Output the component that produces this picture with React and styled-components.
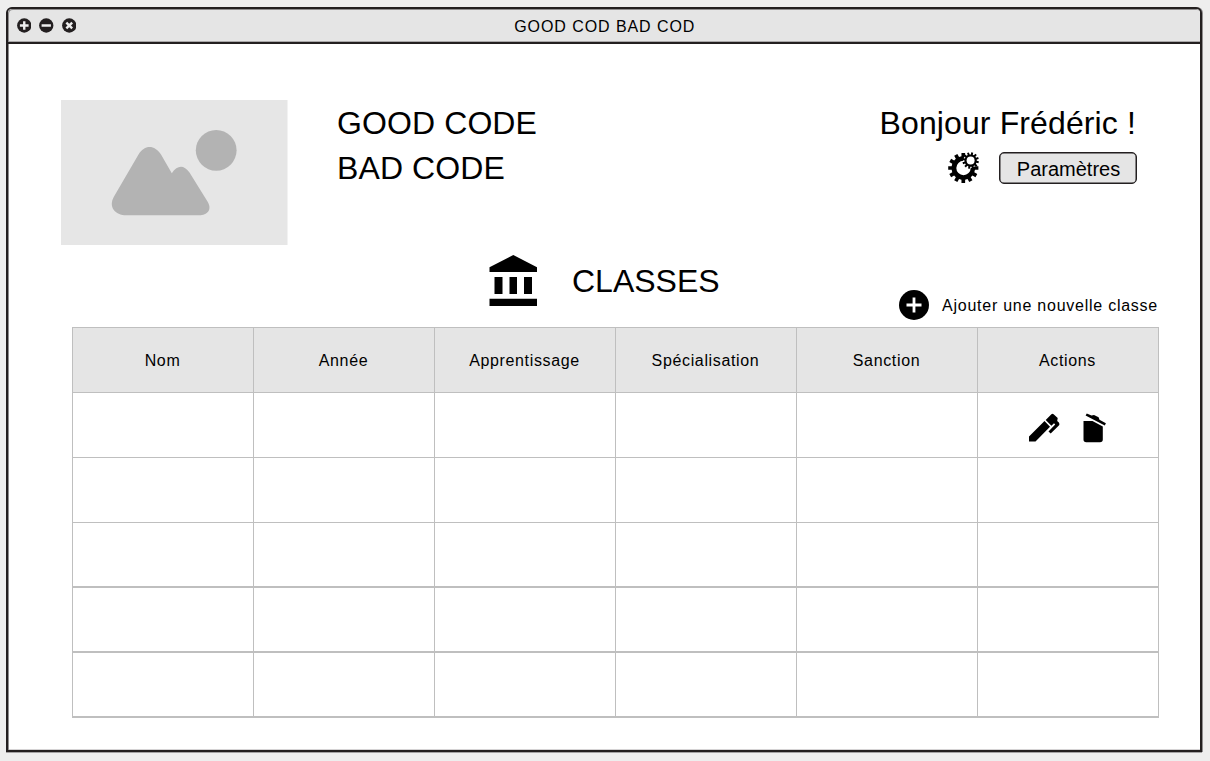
import React from "react";
import styled, { createGlobalStyle } from "styled-components";

const GlobalStyle = createGlobalStyle`
  * { box-sizing: border-box; }
  body {
    margin: 0;
    background: #eeeeee;
    color: #000;
    font-family: "Liberation Sans", Arial, sans-serif;
  }
  svg { display: block; flex: none; }
`;

const Page = styled.div`
  width: 1210px;
  height: 761px;
  padding: 7px 8px 9px 6px;
`;

const Window = styled.main`
  width: 1196px;
  height: 745px;
  border: 2px solid #231f20;
  border-radius: 6px 6px 0 0;
  background: #fff;
  box-shadow: 1px 0 0 #8f8d8e, 0 1px 0 #a5a3a4;
  overflow: hidden;
`;

const TitleBar = styled.header`
  display: grid;
  grid-template-columns: 1fr auto 1fr;
  align-items: center;
  height: 35px;
  padding: 0 7px 0 8.5px;
  background: #e5e5e5;
  border-bottom: 2px solid #231f20;
  border-radius: 4px 4px 0 0;
  box-shadow: inset 1px 1px 0 #8f8d8e, inset 0 -1px 0 #aaa8a9;
`;

const WindowTitle = styled.h1`
  margin: 2px 0 0;
  font-size: 16px;
  font-weight: 400;
  line-height: 20px;
  letter-spacing: 0.93px;
  white-space: nowrap;
`;

const WindowControls = styled.div`
  display: flex;
  gap: 8px;
  margin-top: -1px;
`;

const Content = styled.div`
  height: 706px;
  padding: 56px 42px 0 53px;
  box-shadow: inset 1px 0 0 #8f8d8e, inset 0 -1px 0 #d5d3d4;
`;

const Banner = styled.section`
  display: flex;
  height: 145px;
`;

const Brand = styled.div`
  margin: 1px 0 0 49px;
  font-size: 32px;
  line-height: 45px;
  letter-spacing: 0.1px;
  white-space: nowrap;
`;

const Account = styled.div`
  display: flex;
  flex-direction: column;
  align-items: flex-end;
  margin: 1px 21px 0 auto;
`;

const Greeting = styled.div`
  font-size: 32px;
  line-height: 45px;
  letter-spacing: 0.12px;
  margin-right: 1px;
`;

const SettingsRow = styled.div`
  display: flex;
  align-items: center;
  gap: 19px;
  margin-top: 6px;
`;

const SettingsButton = styled.button`
  width: 138px;
  height: 32px;
  padding: 2px 0 0 1px;
  border: 1px solid #231f20;
  border-radius: 5px;
  background: #e5e5e5;
  box-shadow: inset 0 0 0 0.5px #231f20;
  color: #000;
  font: 20px "Liberation Sans", Arial, sans-serif;
`;

const SectionHead = styled.section`
  display: flex;
  height: 82px;
  padding-left: 428px;
`;

const SectionIcon = styled.div`
  padding-top: 10px;
`;

const SectionTitle = styled.h2`
  margin: 14px 0 0 34px;
  font-size: 32px;
  font-weight: 400;
  line-height: 45px;
`;

const AddAction = styled.div`
  display: flex;
  align-items: center;
  align-self: flex-end;
  gap: 13px;
  margin: 0 0 7px auto;
  font-size: 16px;
  letter-spacing: 0.75px;
  white-space: nowrap;
`;

const AddLabel = styled.span`
  padding-top: 2px;
`;

const Table = styled.div`
  width: 1087px;
  margin-left: 11px;
  border-bottom: 2px solid #bfbfbf;
`;

const Row = styled.div`
  display: grid;
  grid-template-columns: repeat(5, 181px) 182px;
  height: ${({ $height }) => $height || 65}px;
  border-top: ${({ $line }) => $line || 1}px solid #bfbfbf;
  background: ${({ $head }) => ($head ? "#e5e5e5" : "#fff")};
`;

const Cell = styled.div`
  display: flex;
  align-items: center;
  justify-content: center;
  border-left: 1px solid #bfbfbf;
  font-size: 16px;
  letter-spacing: 0.65px;
  padding: 2px 1px 0 0;
  &:last-child { border-right: 1px solid #bfbfbf; }
`;

const RowActions = styled.div`
  display: flex;
  gap: 23px;
  margin-top: 4px;
`;

const ControlIcon = ({ children }) => (
  <svg width="14.5" height="15" viewBox="0 0 14 14">
    <circle cx="7" cy="7" r="6.9" fill="#231f20" />
    <g stroke="#eee" strokeWidth="2.3">{children}</g>
  </svg>
);

const gearPath = (cx, cy, outer, inner, teeth, phase = 0) => {
  const step = (Math.PI * 2) / teeth;
  const points = [];
  for (let i = 0; i < teeth; i++) {
    const a = i * step + phase;
    [[inner, -0.3], [outer, -0.23], [outer, 0.23], [inner, 0.3]].forEach(([r, k]) => {
      points.push(`${(cx + r * Math.cos(a + k * step)).toFixed(2)} ${(cy + r * Math.sin(a + k * step)).toFixed(2)}`);
    });
  }
  return `M${points.join("L")}Z`;
};

const GearsIcon = () => (
  <svg width="32" height="32" viewBox="0 0 32 32">
    <path d={gearPath(15.3, 16, 15.2, 11.8, 12, Math.PI / 2)} />
    <circle cx="15.5" cy="16" r="7.2" fill="#fff" />
    <circle cx="22.6" cy="8.6" r="7.3" fill="#fff" />
    <path d={gearPath(22.6, 8.6, 8.3, 6.2, 12, 0.2)} />
    <circle cx="22.6" cy="8.6" r="4" fill="#fff" />
  </svg>
);

const BankIcon = () => (
  <svg width="49" height="52" viewBox="0 0 49 52">
    <path d="M.5 12.3 24.3 0 48 12.3V17H.5ZM5.5 22h8v17h-8ZM20.5 22H28v17h-7.5ZM35 22h8v17h-8ZM.5 43.7H48V51H.5Z" />
  </svg>
);

const AddIcon = () => (
  <svg width="30" height="30" viewBox="0 0 30 30">
    <circle cx="15" cy="15" r="15" />
    <path d="M15 7.5v15M7.5 15h15" stroke="#fff" strokeWidth="2.8" />
  </svg>
);

const PenIcon = () => (
  <svg width="31" height="30" viewBox="0 0 31 30">
    <path d="M0 23.5 15.5 8 21 13.7 6.5 28.5H0ZM16.7 7 22.4 1.2Q23.5.2 24.6 1.2L28.7 5 28.2 8.1Q31.8 10.5 29.6 12.8L21.7 20.6 19.5 18.5 26.2 11.6 25 10.2 22.4 12.8Z" />
  </svg>
);

const TrashIcon = () => (
  <svg width="24" height="30" viewBox="0 0 24 30">
    <path d="M.5 8H9.5L19.8 13.5V26.5Q19.8 29.3 17 29.3H3.2Q.5 29.3.5 26.5ZM3.8.4 8.5 2.5 11 2 15.6 4.3 16.5 6.7 22.9 10.2 21.8 12.6 2.6 2.6Z" />
  </svg>
);

const Picture = () => (
  <svg width="227" height="145" viewBox="0 0 227 145">
    <path fill="#e6e6e6" d="M0 0h226.5v145H0Z" />
    <circle cx="155.2" cy="50.3" r="20.4" fill="#b3b3b3" />
    <path
      fill="#b3b3b3"
      d="M65.5 115.3H138C146.5 115.3 151.5 109.5 146.5 101.5L128.500 72.500C122.500 64.500 116.500 65.200 110.800 73.200L100 54.500C93.500 44.500 83.500 44.500 77.500 54.500L53 96.500C47 107 54 115.300 65.500 115.300Z"
    />
  </svg>
);

const COLUMNS = ["Nom", "Année", "Apprentissage", "Spécialisation", "Sanction", "Actions"];
const ROWS = [
  { id: 1, actions: true },
  { id: 2 },
  { id: 3, height: 64 },
  { id: 4, line: 2 },
  { id: 5, line: 2 },
];

export default function App() {
  return (
    <Page>
      <GlobalStyle />
      <Window>
        <TitleBar>
          <WindowControls>
            <ControlIcon><path d="M7 2.8v8.4M2.8 7h8.4" /></ControlIcon>
            <ControlIcon><path d="M2.5 7h9" /></ControlIcon>
            <ControlIcon><path d="M4.2 4.2l5.6 5.6M9.8 4.2l-5.6 5.6" /></ControlIcon>
          </WindowControls>
          <WindowTitle>GOOD COD BAD COD</WindowTitle>
        </TitleBar>
        <Content>
          <Banner>
            <Picture />
            <Brand>GOOD CODE<br />BAD CODE</Brand>
            <Account>
              <Greeting>Bonjour Frédéric !</Greeting>
              <SettingsRow>
                <GearsIcon />
                <SettingsButton>Paramètres</SettingsButton>
              </SettingsRow>
            </Account>
          </Banner>
          <SectionHead>
            <SectionIcon><BankIcon /></SectionIcon>
            <SectionTitle>CLASSES</SectionTitle>
            <AddAction><AddIcon /><AddLabel>Ajouter une nouvelle classe</AddLabel></AddAction>
          </SectionHead>
          <Table>
            <Row $head>
              {COLUMNS.map((name) => <Cell key={name}>{name}</Cell>)}
            </Row>
            {ROWS.map(({ id, actions, height, line }) => (
              <Row key={id} $height={height} $line={line}>
                {COLUMNS.map((name) => (
                  <Cell key={name}>
                    {actions && name === "Actions" && (
                      <RowActions><PenIcon /><TrashIcon /></RowActions>
                    )}
                  </Cell>
                ))}
              </Row>
            ))}
          </Table>
        </Content>
      </Window>
    </Page>
  );
}
